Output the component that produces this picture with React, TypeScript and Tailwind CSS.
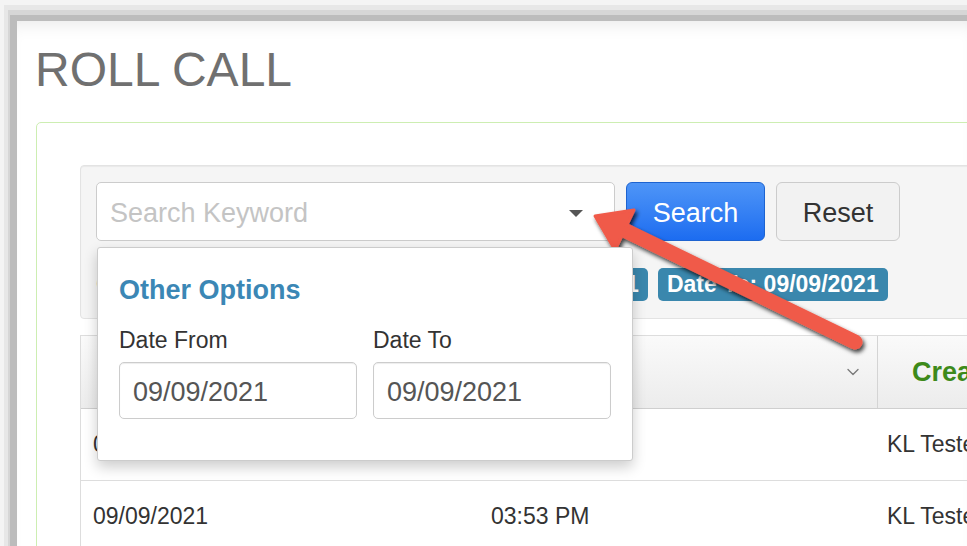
import { ChevronDown } from "lucide-react";
import type { ReactNode } from "react";

const FONT = "font-['Liberation_Sans',Arial,sans-serif]";

const Badge = ({ children }: { children: ReactNode }) => (
  <span className="inline-flex h-[33px] shrink-0 items-center rounded-[5px] bg-[#3a87ad] px-[9px] pt-[1px] text-[23px] font-bold leading-none text-white">
    {children}
  </span>
);

const DateField = ({ label, value }: { label: string; value: string }) => (
  <div className="flex w-[238px] flex-col">
    <label className="text-[23px] leading-none text-[#333]">{label}</label>
    <div className="mt-[10px] flex h-[57px] items-center rounded-[5px] border border-[#ccc] bg-white px-[13px] pt-[3px] text-[27px] text-[#555] shadow-[inset_0_1px_1px_rgba(0,0,0,0.075)]">
      {value}
    </div>
  </div>
);

// red callout pointing at the options caret
const Callout = () => (
  <svg
    className="pointer-events-none absolute left-0 top-0"
    width="967"
    height="546"
    viewBox="0 0 967 546"
  >
    <defs>
      <filter id="arrow-shadow" x="-20%" y="-20%" width="140%" height="140%">
        <feDropShadow dx="2" dy="3" stdDeviation="2" floodColor="#000" floodOpacity="0.75" />
      </filter>
    </defs>
    <g filter="url(#arrow-shadow)">
      <line
        x1="855"
        y1="342"
        x2="618"
        y2="227"
        stroke="#f05a49"
        strokeWidth="15"
        strokeLinecap="round"
      />
      <polygon
        points="595,216 634,210 615,250"
        fill="#f05a49"
        stroke="#f05a49"
        strokeWidth="3"
        strokeLinejoin="round"
      />
    </g>
  </svg>
);

const Row = ({ date, time, by }: { date: string; time: string; by: string }) => (
  <div className="flex h-[72px] items-center border-b border-[#ddd] text-[23px] text-[#333]">
    <div className="w-[398px] shrink-0 pl-[12px]">{date}</div>
    <div className="w-[399px] shrink-0 pl-[12px]">{time}</div>
    <div className="flex-1 whitespace-nowrap pl-[9px]">{by}</div>
  </div>
);

export default function App() {
  return (
    <div className={`relative h-[546px] w-[967px] overflow-hidden bg-[#f4f4f4] ${FONT}`}>
      <div className="h-full bg-[#e7e7e7] pl-[4px] pt-[5px] [margin-left:4px] [margin-top:5px]">
        <div className="h-full bg-[#d6d6d6] pl-[2px] pt-[5px]">
          <div className="h-full bg-[#bcbcbc] pl-[7px] pt-[6px]">
            <div className="h-full bg-white pl-[15px] pt-[25px] shadow-[inset_0_14px_18px_-12px_rgba(0,0,0,0.1)]">
              <h1 className="ml-[3px] text-[48px] font-normal leading-none text-[#707070]">ROLL CALL</h1>

              <div className="ml-[4px] mt-[28px] w-[1100px] rounded-[5px] border border-[#cdeeb2] pl-[43px] pt-[42px]">
                {/* search well */}
                <div className="relative w-[1000px] rounded-[4px] border border-[#e3e3e3] bg-[#f5f5f5] pb-[16px] pl-[15px] pt-[16px] shadow-[inset_0_1px_1px_rgba(0,0,0,0.05)]">
                  <div className="flex gap-[11px]">
                    <div className="flex h-[59px] w-[519px] items-center justify-between rounded-[5px] border border-[#ccc] bg-white pl-[13px] pr-[31px] pt-[3px] text-[27px] text-[#c4c4c4]">
                      <span>Search Keyword</span>
                      <span className="h-0 w-0 border-x-[7px] border-t-[7px] border-x-transparent border-t-[#555]" />
                    </div>
                    <button className="flex h-[59px] w-[139px] items-center justify-center rounded-[6px] border border-[#1d63d0] bg-gradient-to-b from-[#4e95f7] to-[#1c6cf0] pt-[3px] text-[27px] text-white">
                      Search
                    </button>
                    <button className="flex h-[59px] w-[124px] items-center justify-center rounded-[6px] border border-[#ccc] bg-[#f2f2f2] pt-[3px] text-[27px] text-[#333]">
                      Reset
                    </button>
                  </div>

                  <div className="mt-[26px] flex items-center">
                    <span className="w-[291px] shrink-0 text-[23px] text-[#333]">Criteria:</span>
                    <Badge>Date From: 09/09/2021</Badge>
                    <span className="w-[10px] shrink-0" />
                    <Badge>Date To: 09/09/2021</Badge>
                  </div>

                  {/* options dropdown */}
                  <div className="absolute left-[16px] top-[81px] z-10 h-[214px] w-[536px] rounded-[3px] border border-[#ccc] bg-white px-[21px] pt-[29px] shadow-[0_6px_14px_rgba(0,0,0,0.2)]">
                    <div className="text-[27px] font-bold leading-none text-[#3b87b5]">Other Options</div>
                    <div className="mt-[25px] flex gap-[16px]">
                      <DateField label="Date From" value="09/09/2021" />
                      <DateField label="Date To" value="09/09/2021" />
                    </div>
                  </div>
                </div>

                {/* roll call table */}
                <div className="mt-[16px] w-[1000px] border-l border-t border-[#ddd]">
                  <div className="flex h-[73px] items-center border-b border-[#cfcfcf] bg-gradient-to-b from-[#fafafa] to-[#ececec]">
                    <div className="h-full w-[398px] shrink-0 border-r border-[#ddd]" />
                    <div className="flex h-full w-[399px] shrink-0 items-center justify-end border-r border-[#d4d4d4] pr-[14px]">
                      <ChevronDown size={20} strokeWidth={1.6} className="text-[#7a7a7a]" />
                    </div>
                    <div className="pl-[34px] pt-[2px] text-[27px] font-bold text-[#3d8a1a]">Created By</div>
                  </div>
                  <Row date="09/09/2021" time="03:53 PM" by="KL Tester" />
                  <Row date="09/09/2021" time="03:53 PM" by="KL Tester" />
                </div>
              </div>
            </div>
          </div>
        </div>
      </div>
      <Callout />
    </div>
  );
}
